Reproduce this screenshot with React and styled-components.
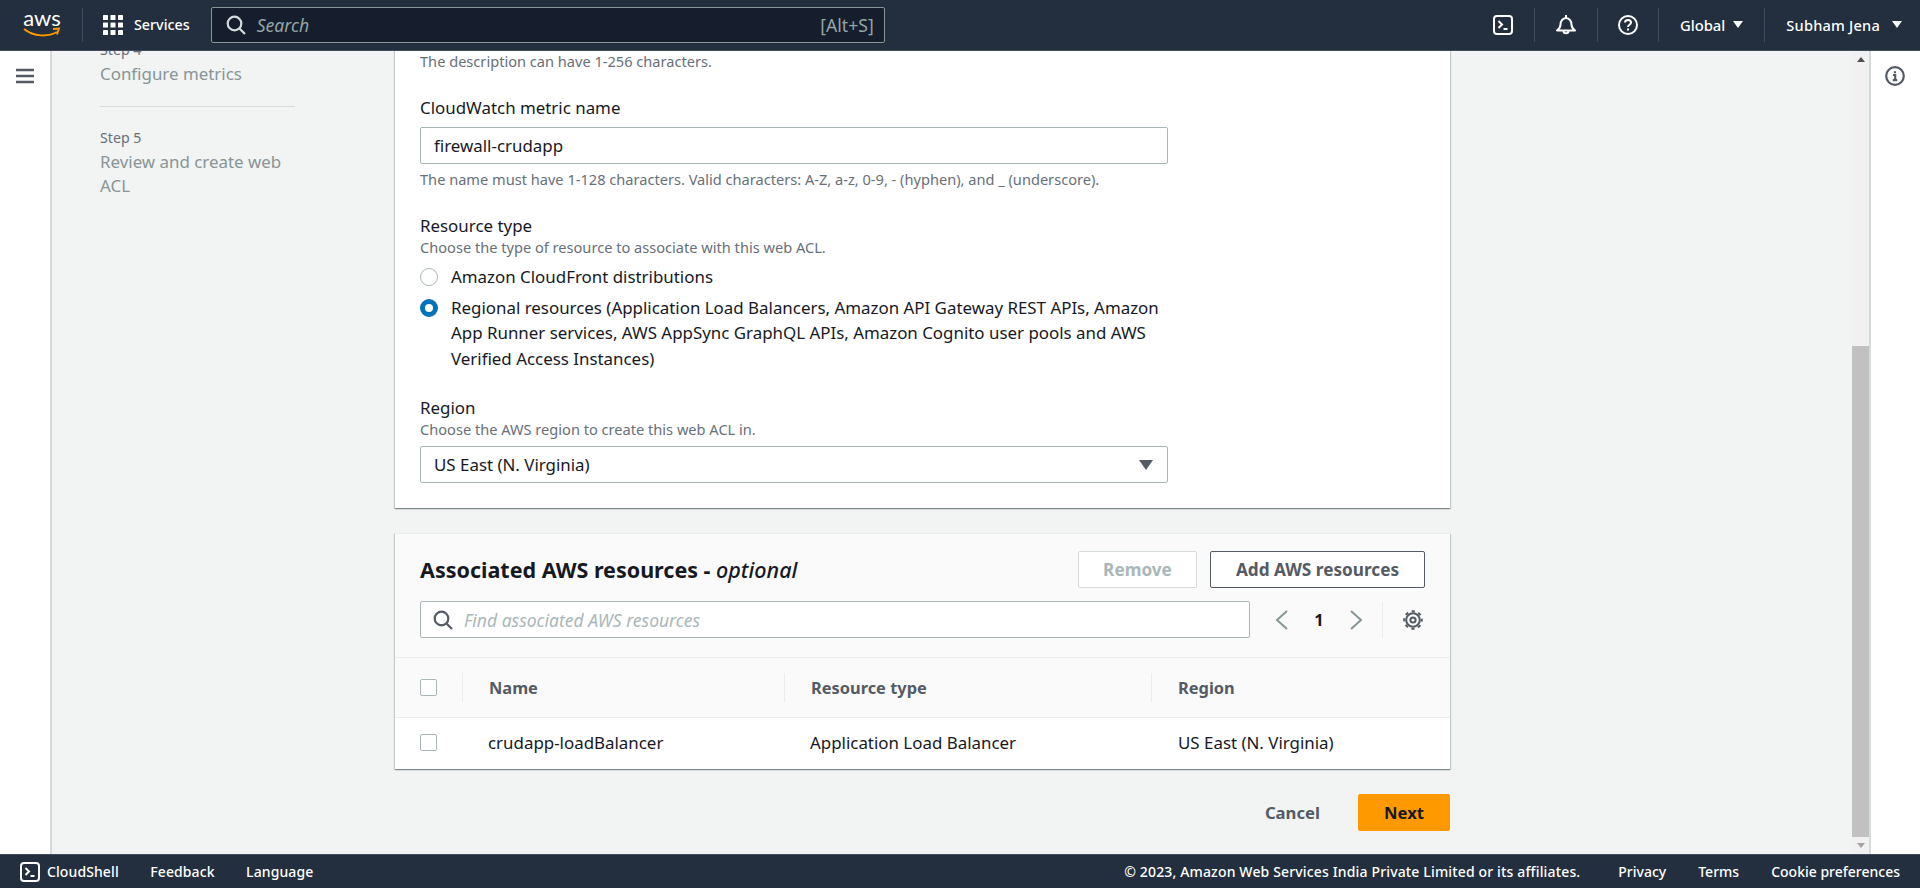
import React from "react";
import styled, { createGlobalStyle } from "styled-components";

const Global = createGlobalStyle`
  html, body { margin: 0; padding: 0; height: 100%; overflow: hidden; }
  body { font-family: "Noto Sans", "Open Sans", sans-serif; color: #16191f; background: #fff; }
  #root { height: 100%; }
  * { box-sizing: border-box; }
`;

const Page = styled.div`display: flex; flex-direction: column; height: 100vh;`;

const Header = styled.header`
  flex: 0 0 51px; display: flex; align-items: center; background: #232f3e; color: #fff;
  border-bottom: 1px solid #414d5c; padding: 0 0 1px 22px; position: relative; z-index: 2;
`;
const Logo = styled.div`
  width: 40px; height: 32px; display: flex; flex-direction: column; align-items: center;
  font: 400 22px/20px "Lato", sans-serif; margin-top: -2px;
  svg { display: block; margin-top: -1px; }
`;
const VLine = styled.span`
  width: 1px; height: ${p => p.$h || 34}px; background: ${p => p.$c || "#414d5c"}; flex: none; margin: ${p => p.$m || "0"};
`;
const NavLabel = styled.span`
  font-size: ${p => p.$fs || 14}px; letter-spacing: ${p => p.$ls || 0}px; font-weight: 500; color: #fff; white-space: nowrap;
`;
const ServicesBtn = styled.div`display: flex; align-items: center; gap: 11px; margin: 0 21px 0 20px;`;
const Search = styled.div`
  flex: 0 0 674px; height: 36px; display: flex; align-items: center; background: #161e2d;
  border: 1px solid #879596; border-radius: 2px; padding: 0 10px 0 14px; gap: 11px;
`;
const SearchHint = styled.span`font-size: 17.6px; font-style: italic; color: #95a5a6; flex: 1;`;
const Shortcut = styled.span`font-size: 17.6px; color: #95a5a6;`;
const HeaderRight = styled.div`margin-left: auto; display: flex; align-items: center;`;
const IconSlot = styled.div`width: ${p => p.$w}px; display: flex; justify-content: center; align-items: center;`;
const Menu = styled.div`display: flex; align-items: center; gap: ${p => p.$g}px; padding: ${p => p.$p};`;
const Caret = styled.span`
  width: 0; height: 0; border-left: 5px solid transparent; border-right: 5px solid transparent; border-top: 7px solid #fff;
`;

const Body = styled.div`flex: 1; display: flex; min-height: 0;`;
const RailLeft = styled.aside`
  flex: 0 0 52px; background: #fff; border-right: 2px solid #d5dbdb; display: flex; justify-content: center; padding: 17px 1px 0 0;
`;
const RailRight = styled.aside`
  flex: 0 0 51px; background: #fff; border-left: 2px solid #d5dbdb; display: flex; justify-content: center; padding: 15px 2px 0 0;
`;
const Main = styled.main`flex: 1; display: flex; background: #f2f3f3; overflow: hidden; min-width: 0;`;
const Scrolled = styled.div`flex: 1; display: flex; align-items: flex-start; margin-top: -40px; min-width: 0;`;

const Steps = styled.nav`flex: 0 0 195px; margin-left: 48px; padding-top: 29px;`;
const StepSmall = styled.div`font-size: 14.2px; line-height: 20px; color: #687078;`;
const StepName = styled.div`font-size: 16.9px; line-height: 24.5px; color: #879596; margin-top: 2px;`;
const StepRule = styled.hr`border: 0; border-top: 1px solid #d5dbdb; margin: 19px 0 21px;`;

const Column = styled.div`flex: 0 0 1055px; margin-left: 100px;`;
const Card = styled.section`
  background: #fff; box-shadow: 0 1px 1px 0 rgba(0,28,36,.3), 1px 1px 1px 0 rgba(0,28,36,.15), -1px 1px 1px 0 rgba(0,28,36,.15);
  border-top: 1px solid #eaeded;
`;
const FormBody = styled.div`padding: 40px 25px 19px;`;
const Hint = styled.div`font-size: 14.6px; line-height: 18px; color: #687078;`;
const Label = styled.div`font-size: 16.9px; line-height: 22px; color: #16191f; margin: ${p => p.$mt}px 0 1px;`;
const Control = styled.div`
  width: 748px; height: 37px; display: flex; align-items: center; justify-content: space-between;
  border: 1px solid #aab7b8; border-radius: 2px; padding: 0 13px; background: #fff; font-size: 16.9px; color: #16191f;
  margin: 8px 0 6px;
`;
const SelectCaret = styled.span`
  width: 0; height: 0; border-left: 7px solid transparent; border-right: 7px solid transparent; border-top: 10px solid #545b64; margin-right: 1px;
`;
const RadioRow = styled.div`display: flex; gap: 13px; margin-top: ${p => p.$mt}px; width: 748px;`;
const RadioDot = styled.span`
  flex: none; width: 18px; height: 18px; border-radius: 50%; margin-top: 4px;
  border: ${p => (p.$on ? "5px solid #0073bb" : "1px solid #aab7b8")}; background: #fff;
`;
const RadioText = styled.div`font-size: 16.9px; line-height: 25.5px;`;

const Assoc = styled(Card)`margin-top: 25px;`;
const AssocHead = styled.div`background: #fafafa; padding: 17px 25px 0 25px;`;
const TitleRow = styled.div`display: flex; align-items: center; justify-content: space-between;`;
const Title = styled.h2`
  margin: 0; font-size: 21.5px; line-height: 28px; font-weight: 700; color: #16191f;
  em { font-weight: 500; font-style: italic; }
`;
const BtnRow = styled.div`display: flex; gap: 13px;`;
const Btn = styled.button`
  height: 37px; padding: 0; width: ${p => p.$w}px; border-radius: 2px; font: 700 ${p => p.$primary ? 16.6 : 17.2}px "Noto Sans", sans-serif;
  background: ${p => p.$primary ? "#ff9900" : "#fff"};
  color: ${p => p.$off ? "#aab7b8" : p.$primary ? "#16191f" : "#545b64"};
  border: 1px solid ${p => p.$off ? "#d5dbdb" : p.$primary ? "#ff9900" : "#545b64"};
`;
const FilterRow = styled.div`display: flex; align-items: center; margin-top: 13px; padding-bottom: 19px;`;
const Filter = styled.div`
  flex: 0 0 830px; height: 37px; display: flex; align-items: center; gap: 11px; padding: 0 12px; background: #fff;
  border: 1px solid #aab7b8; border-radius: 2px;
`;
const FilterHint = styled.span`font-size: 17.5px; font-style: italic; color: #aab7b8;`;
const Pager = styled.div`display: flex; align-items: center; flex: 1; margin-left: 25px;`;
const PageNum = styled.span`font-size: 16.5px; font-weight: 700; width: 60px; text-align: center;`;
const Table = styled.div`display: grid; grid-template-columns: 68px 322px 367px 1fr;`;
const HeadCell = styled.div`
  height: 61px; background: #fafafa; border-top: 1px solid #eaeded; border-bottom: 1px solid #eaeded;
  display: flex; align-items: center; font-size: 16.4px; font-weight: 700; color: #545b64;
  padding-left: ${p => p.$pl || 26}px; position: relative;
  ${p => p.$sep && `&::after { content: ""; position: absolute; right: 0; top: 15px; bottom: 15px; width: 1px; background: #eaeded; }`}
`;
const Cell = styled.div`
  height: 51px; display: flex; align-items: center; font-size: 16.9px; padding: 0 0 2px ${p => p.$pl || 25}px;
`;
const Check = styled.span`width: 17px; height: 17px; display: block; background: #fff; border: 1px solid #aab7b8; border-radius: 2px;`;
const Actions = styled.div`display: flex; justify-content: flex-end; align-items: center; margin: 25px 0 0; gap: 38px;`;
const LinkText = styled.span`font-size: 16.7px; font-weight: 700; color: #545b64;`;

const ScrollBar = styled.div`flex: 0 0 17px; display: flex; flex-direction: column; align-items: stretch; background: #f1f1f1; margin-left: 1px;`;
const ArrowBox = styled.div`height: 17px; display: flex; align-items: center; justify-content: center;`;
const Up = styled.span`width: 0; height: 0; border-left: 4px solid transparent; border-right: 4px solid transparent; border-bottom: 5px solid ${p => p.$c};`;
const Down = styled.span`width: 0; height: 0; border-left: 4px solid transparent; border-right: 4px solid transparent; border-top: 5px solid ${p => p.$c};`;
const TrackGap = styled.div`height: ${p => p.$h}px;`;
const Thumb = styled.div`flex: 1; background: #c1c1c1;`;

const Footer = styled.footer`
  flex: 0 0 34px; display: flex; align-items: center; background: #232f3e; color: #fff; padding: 0 20px;
  border-top: 1px solid #414d5c; font-size: 14px; font-weight: 500; position: relative; z-index: 2;
`;
const FootLeft = styled.div`display: flex; align-items: center; gap: 31.500px; letter-spacing: .1px;`;
const Shell = styled.div`display: flex; align-items: center; gap: 7px;`;
const FootRight = styled.div`margin-left: auto; display: flex; align-items: center; gap: 32px;`;
const Copyright = styled.span`letter-spacing: .15px; margin-right: 6px;`;

const Term = ({ s = 20 }) => (
  <svg width={s} height={s} viewBox="0 0 20 20" fill="none" stroke="#fff" strokeWidth="2">
    <rect x="1" y="1" width="18" height="18" rx="3" />
    <path d="M5.500 6l3.500 3.500L5.500 13M10.500 14h4" />
  </svg>
);
const Bell = () => (
  <svg width="20" height="20" viewBox="0 0 20 20" fill="none" stroke="#fff" strokeWidth="2" strokeLinejoin="round">
    <path d="M1 15.500h18c-2-1.500-3.500-3-3.500-6 0-3-2-6.500-5.500-6.500S4.500 6.500 4.500 9.500c0 3-1.500 4.500-3.500 6z" />
    <path d="M7.500 16c0 3 5 3 5 0" />
    <path d="M10 0v3" />
  </svg>
);
const Help = () => (
  <svg width="20" height="20" viewBox="0 0 20 20" fill="none" stroke="#fff" strokeWidth="2">
    <circle cx="10" cy="10" r="9" />
    <path d="M7 7.500C7 5.800 8.400 5 10 5s3 1 3 2.500c0 2.200-3 2.200-3 4.500" />
    <path d="M10 13.500v2" />
  </svg>
);
const Grid = () => (
  <svg width="20" height="20" viewBox="0 0 20 20" fill="#fff">
    {[0, 7.5, 15].flatMap(x => [0, 7.5, 15].map(y => <rect key={`${x}-${y}`} x={x} y={y} width="5" height="5" rx=".6" />))}
  </svg>
);
const Loupe = ({ c }) => (
  <svg width="20" height="20" viewBox="0 0 20 20" fill="none" stroke={c} strokeWidth="2.200">
    <circle cx="8.500" cy="8.500" r="6.800" />
    <path d="M13.500 13.500l5.500 5.500" />
  </svg>
);
const Burger = () => (
  <svg width="18" height="16" viewBox="0 0 18 16" fill="none" stroke="#545b64" strokeWidth="2.400">
    <path d="M0 2h18M0 8h18M0 14h18" />
  </svg>
);
const Info = () => (
  <svg width="20" height="20" viewBox="0 0 20 20" fill="none" stroke="#545b64" strokeWidth="2.200">
    <circle cx="10" cy="10" r="8.800" />
    <path d="M8 9h2.200v5M7.800 14.200h4.400M10 5.300v2" />
  </svg>
);
const Chevron = ({ dir }) => (
  <svg width="14" height="20" viewBox="0 0 14 20" fill="none" stroke="#879596" strokeWidth="2">
    <path d={dir === "l" ? "M12 1L2 10l10 9" : "M2 1l10 9-10 9"} />
  </svg>
);
const Gear = () => (
  <svg width="20" height="20" viewBox="0 0 20 20" fill="none" stroke="#545b64" strokeWidth="2">
    <circle cx="10" cy="10" r="2.600" />
    <circle cx="10" cy="10" r="6.800" />
    <circle cx="10" cy="10" r="8.800" strokeDasharray="3.300 3.610" strokeDashoffset="1.650" />
  </svg>
);

export default function App() {
  return (
    <Page>
      <Global />
      <Header>
        <Logo>
          aws
          <svg width="38" height="12" viewBox="0 0 38 12" fill="none">
            <path d="M1 2c10 8 24 8 33 3" stroke="#ff9900" strokeWidth="2" />
            <path d="M30 2l6-.5-2 6" stroke="#ff9900" strokeWidth="1.800" />
          </svg>
        </Logo>
        <VLine $m="0 0 0 20px" />
        <ServicesBtn><Grid /><NavLabel $fs={14.3}>Services</NavLabel></ServicesBtn>
        <Search>
          <Loupe c="#d5dbdb" />
          <SearchHint>Search</SearchHint>
          <Shortcut>[Alt+S]</Shortcut>
        </Search>
        <HeaderRight>
          <IconSlot $w={62}><Term /></IconSlot>
          <VLine />
          <IconSlot $w={62}><Bell /></IconSlot>
          <VLine />
          <IconSlot $w={60}><Help /></IconSlot>
          <VLine />
          <Menu $g={8} $p="0 21px"><NavLabel $fs={14.8}>Global</NavLabel><Caret /></Menu>
          <VLine />
          <Menu $g={12} $p="0 18px 0 21px"><NavLabel $fs={14.6} $ls={.2}>Subham Jena</NavLabel><Caret /></Menu>
        </HeaderRight>
      </Header>
      <Body>
        <RailLeft><Burger /></RailLeft>
        <Main>
          <Scrolled>
            <Steps>
              <StepSmall>Step 4</StepSmall>
              <StepName>Configure metrics</StepName>
              <StepRule />
              <StepSmall>Step 5</StepSmall>
              <StepName>Review and create web ACL</StepName>
            </Steps>
            <Column>
              <Card>
                <FormBody>
                  <Hint>The description can have 1-256 characters.</Hint>
                  <Label $mt={27}>CloudWatch metric name</Label>
                  <Control>firewall-crudapp</Control>
                  <Hint>The name must have 1-128 characters. Valid characters: A-Z, a-z, 0-9, - (hyphen), and _ (underscore).</Hint>
                  <Label $mt={27}>Resource type</Label>
                  <Hint>Choose the type of resource to associate with this web ACL.</Hint>
                  <RadioRow $mt={8}><RadioDot /><RadioText>Amazon CloudFront distributions</RadioText></RadioRow>
                  <RadioRow $mt={5}><RadioDot $on /><RadioText>Regional resources (Application Load Balancers, Amazon API Gateway REST APIs, Amazon App Runner services, AWS AppSync GraphQL APIs, Amazon Cognito user pools and AWS Verified Access Instances)</RadioText></RadioRow>
                  <Label $mt={26}>Region</Label>
                  <Hint>Choose the AWS region to create this web ACL in.</Hint>
                  <Control>US East (N. Virginia)<SelectCaret /></Control>
                </FormBody>
              </Card>
              <Assoc>
                <AssocHead>
                  <TitleRow>
                    <Title>Associated AWS resources - <em>optional</em></Title>
                    <BtnRow>
                      <Btn $off $w={119}>Remove</Btn>
                      <Btn $w={215}>Add AWS resources</Btn>
                    </BtnRow>
                  </TitleRow>
                  <FilterRow>
                    <Filter><Loupe c="#545b64" /><FilterHint>Find associated AWS resources</FilterHint></Filter>
                    <Pager>
                      <Chevron dir="l" /><PageNum>1</PageNum><Chevron dir="r" />
                      <VLine $h={36} $c="#eaeded" $m="0 20px 0 19px" />
                      <Gear />
                    </Pager>
                  </FilterRow>
                </AssocHead>
                <Table>
                  <HeadCell $sep $pl={25}><Check /></HeadCell>
                  <HeadCell $sep>Name</HeadCell>
                  <HeadCell $sep>Resource type</HeadCell>
                  <HeadCell>Region</HeadCell>
                  <Cell><Check /></Cell>
                  <Cell>crudapp-loadBalancer</Cell>
                  <Cell>Application Load Balancer</Cell>
                  <Cell $pl={26}>US East (N. Virginia)</Cell>
                </Table>
              </Assoc>
              <Actions>
                <LinkText>Cancel</LinkText>
                <Btn $primary $w={92}>Next</Btn>
              </Actions>
            </Column>
          </Scrolled>
          <ScrollBar>
            <ArrowBox><Up $c="#505050" /></ArrowBox>
            <TrackGap $h={278} />
            <Thumb />
            <ArrowBox><Down $c="#a3a3a3" /></ArrowBox>
          </ScrollBar>
        </Main>
        <RailRight><Info /></RailRight>
      </Body>
      <Footer>
        <FootLeft>
          <Shell><Term /><span>CloudShell</span></Shell>
          <span>Feedback</span>
          <span>Language</span>
        </FootLeft>
        <FootRight>
          <Copyright>© 2023, Amazon Web Services India Private Limited or its affiliates.</Copyright>
          <span>Privacy</span>
          <span>Terms</span>
          <span>Cookie preferences</span>
        </FootRight>
      </Footer>
    </Page>
  );
}
